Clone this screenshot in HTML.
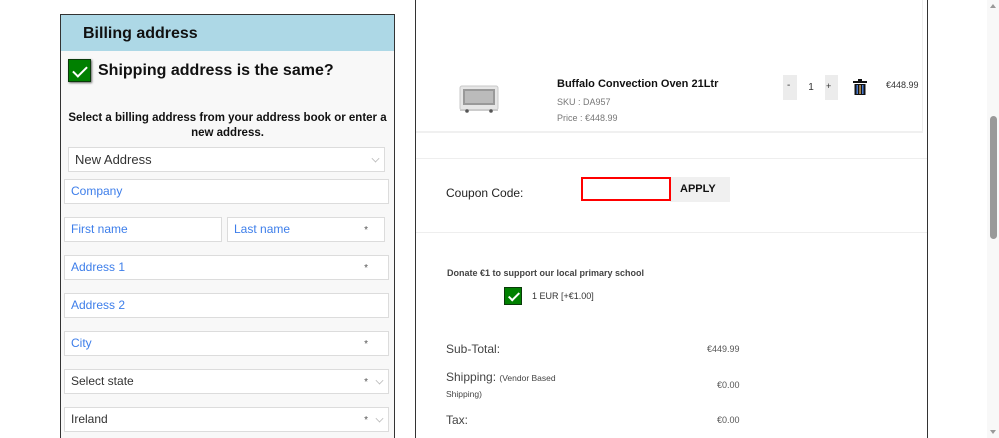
<!DOCTYPE html>
<html><head><meta charset="utf-8">
<style>
*{margin:0;padding:0;box-sizing:border-box}
html,body{width:999px;height:438px;overflow:hidden}
body{background:#fff;font-family:"Liberation Sans","DejaVu Sans",sans-serif;position:relative;color:#222}
.a{position:absolute;white-space:nowrap}
.lp{position:absolute;left:60px;top:14px;width:335px;height:430px;border:1px solid #333;background:#f8f8f8}
.hd{position:absolute;left:0;top:0;width:100%;height:36px;background:#add8e6}
.f{position:absolute;background:#fff;border:1px solid #dcdcdc;height:25px;font-size:12px;color:#3d7eea;padding-left:6px;line-height:23px}
.f .s{position:absolute;right:18px;top:1px;color:#555;font-size:10px}
.f.sel{color:#333}
.chev{position:absolute;right:5px;top:7px;width:7px;height:7px;border-right:1px solid #bbb;border-bottom:1px solid #bbb;transform:rotate(45deg) scale(.8)}
.cb{position:absolute;background:#008000;border:1px solid #0a3a0a}
.cb:after{content:"";position:absolute;border-right:2px solid #fff;border-bottom:2px solid #fff;transform:rotate(45deg)}
.cb1:after{left:7px;top:3px;width:6px;height:12px}
.cb2:after{left:6px;top:2px;width:4px;height:9px}
.g{color:#777;font-size:9px}
</style></head><body>
<div class="lp">
 <div class="hd"></div>
 <div class="a" style="left:22px;top:10px;font-size:16px;font-weight:bold;color:#111">Billing address</div>
 <div class="cb cb1" style="left:7px;top:44px;width:23px;height:23px;box-shadow:1px 1px 2px #666"></div>
 <div class="a" style="left:37px;top:47px;font-size:16px;font-weight:bold;color:#111">Shipping address is the same?</div>
 <div class="a" style="left:0;width:333px;top:96px;text-align:center;font-size:11.5px;font-weight:bold;line-height:15px;white-space:normal;padding:0 4px;color:#111">Select a billing address from your address book or enter a new address.</div>
</div>
<div class="f sel" style="left:68px;top:147px;width:317px;font-size:13px">New Address<span class="chev"></span></div>
<div class="f" style="left:64px;top:179px;width:325px">Company</div>
<div class="f" style="left:64px;top:217px;width:158px">First name</div>
<div class="f" style="left:227px;top:217px;width:158px">Last name<span class="s" style="right:16px">*</span></div>
<div class="f" style="left:64px;top:255px;width:325px">Address 1<span class="s" style="right:20px">*</span></div>
<div class="f" style="left:64px;top:293px;width:325px">Address 2</div>
<div class="f" style="left:64px;top:331px;width:325px">City<span class="s" style="right:20px">*</span></div>
<div class="f sel" style="left:64px;top:369px;width:325px">Select state<span class="s" style="right:20px">*</span><span class="chev"></span></div>
<div class="f sel" style="left:64px;top:407px;width:325px">Ireland<span class="s" style="right:20px">*</span><span class="chev"></span></div>

<div class="a" style="left:415px;top:0;width:1px;height:438px;background:#333"></div>
<div class="a" style="left:927px;top:0;width:1px;height:438px;background:#333"></div>
<div class="a" style="left:922px;top:0;width:1px;height:131px;background:#eee"></div>
<div class="a" style="left:416px;top:131px;width:507px;height:2px;background:#f0f0f0"></div>
<div class="a" style="left:416px;top:158px;width:511px;height:1px;background:#eee"></div>
<div class="a" style="left:416px;top:232px;width:511px;height:1px;background:#eee"></div>

<svg class="a" style="left:459px;top:85px" width="40" height="30" viewBox="0 0 40 30">
<rect x="1" y="1" width="38" height="24" rx="2" fill="#e6e6e6" stroke="#c8c8c8"/>
<rect x="4" y="4" width="32" height="16" fill="#999"/><rect x="6" y="6" width="28" height="12" fill="#bbb"/>
<rect x="1" y="24" width="38" height="2" fill="#ccc"/>
<circle cx="8" cy="26" r="1.8" fill="#555"/><circle cx="32" cy="26" r="1.8" fill="#555"/></svg>
<div class="a" style="left:557px;top:78px;font-size:11px;font-weight:bold;color:#111">Buffalo Convection Oven 21Ltr</div>
<div class="a g" style="left:557px;top:97px">SKU : DA957</div>
<div class="a g" style="left:557px;top:113px">Price : €448.99</div>
<div class="a" style="left:783px;top:75px;width:55px;height:25px;background:#ececec"></div>
<div class="a" style="left:797px;top:75px;width:28px;height:25px;background:#fff;text-align:center;font-size:10px;line-height:25px;color:#333">1</div>
<div class="a" style="left:787px;top:80px;font-size:10px;color:#333">-</div>
<div class="a" style="left:826px;top:81px;font-size:9px;color:#333">+</div>
<svg class="a" style="left:853px;top:79px" width="14" height="16" viewBox="0 0 14 16"><rect x="0" y="2" width="14" height="2" fill="#111"/><rect x="5" y="0" width="4" height="2" fill="#111"/><rect x="1.5" y="5" width="11" height="11" fill="#111"/><rect x="3.5" y="6" width="1.5" height="9" fill="#4a7bd0"/><rect x="6.3" y="6" width="1.5" height="9" fill="#c9a060"/><rect x="9" y="6" width="1.5" height="9" fill="#4a7bd0"/></svg>
<div class="a" style="left:886px;top:80px;font-size:9px;color:#333">€448.99</div>

<div class="a" style="left:446px;top:186px;font-size:12px;color:#222">Coupon Code:</div>
<div class="a" style="left:670px;top:177px;width:60px;height:25px;background:#f0f0f0;font-size:11px;font-weight:bold;line-height:25px;padding-left:10px;color:#111">APPLY</div>
<div class="a" style="left:581px;top:177px;width:90px;height:24px;border:2px solid #f00;background:#fff"></div>

<div class="a" style="left:447px;top:268px;font-size:9px;font-weight:bold;color:#444">Donate €1 to support our local primary school</div>
<div class="cb cb2" style="left:504px;top:287px;width:18px;height:18px"></div>
<div class="a" style="left:532px;top:291px;font-size:9px;color:#333">1 EUR [+€1.00]</div>

<div class="a" style="left:446px;top:342px;font-size:12px;color:#444">Sub-Total:</div>
<div class="a" style="left:707px;top:344px;font-size:9px;color:#555">€449.99</div>
<div class="a" style="left:446px;top:370px;font-size:12px;color:#444">Shipping: <span style="font-size:8.5px">(Vendor Based</span></div>
<div class="a" style="left:446px;top:389px;font-size:8.5px;color:#444">Shipping)</div>
<div class="a" style="left:717px;top:380px;font-size:9px;color:#555">€0.00</div>
<div class="a" style="left:446px;top:413px;font-size:12px;color:#444">Tax:</div>
<div class="a" style="left:717px;top:415px;font-size:9px;color:#555">€0.00</div>

<div class="a" style="left:987px;top:0;width:12px;height:438px;background:#f8f8f8"></div>
<div class="a" style="left:990px;top:4px;width:0;height:0;border-left:3px solid transparent;border-right:3px solid transparent;border-bottom:4px solid #999"></div>
<div class="a" style="left:990px;top:116px;width:7px;height:123px;background:#999;border-radius:4px"></div>
<div class="a" style="left:990px;top:430px;width:0;height:0;border-left:3px solid transparent;border-right:3px solid transparent;border-top:4px solid #999"></div>
</body></html>
